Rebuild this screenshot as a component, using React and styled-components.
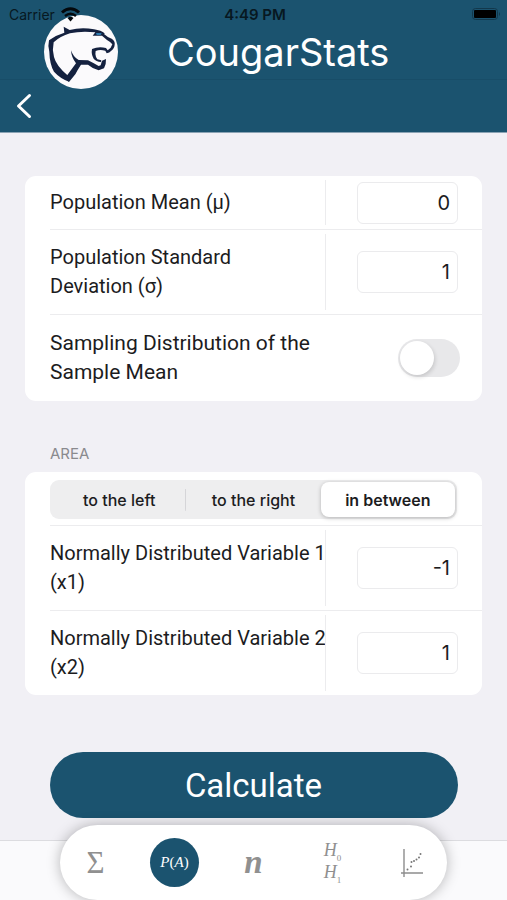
import { useState } from "react";
import styled, { createGlobalStyle } from "styled-components";

function CougarLogo() {
  return (
    <Logo viewBox="0 0 222 222" role="img" aria-label="Cougar">
      <circle cx="111" cy="111" r="111" fill="#fbfafc" />
      {/* back of the head and neck */}
      <path
        fill="#14213f"
        d="M59 35 L77 45 Q112 36 150 43 Q172 46 182 55 L177 62 L146 62 L154 52 Q112 47 78 55 Q48 64 29 82 Q24 104 30 126 Q36 152 72 182 L75 200 Q48 190 30 170 Q17 148 16 110 Q11 92 15 76 Q36 60 61 53 Z"
      />
      {/* throat and lower jaw */}
      <path
        fill="#14213f"
        d="M81 106 Q88 127 104 135 L132 136 Q150 145 164 153 L170 151 L174 137 L186 132 Q187 148 180 160 L164 166 Q146 161 132 149 L111 149 Q101 164 94 178 L75 201 L60 186 L70 180 L96 145 Q82 127 81 106 Z"
      />
      {/* muzzle and mouth */}
      <path
        fill="#14213f"
        d="M177 55 Q190 67 203 71 Q214 78 212 89 Q211 101 201 108 Q197 114 188 115 L184 107 Q167 103 155 108 Q153 115 156 126 L160 133 L172 136 L171 141 Q156 140 149 131 Q141 118 144 102 Q163 94 186 99 L191 106 Q196 101 200 98 L205 88 Q200 81 189 75 L174 62 Z"
      />
      <path fill="#2b78ad" d="M156 54 L173 54 L170 60 L158 60 Z" />
    </Logo>
  );
}

function StatusBar() {
  return (
    <StyledStatus>
      <Carrier>
        Carrier
        <svg width="19" height="15" viewBox="0 0 19 15" fill="none" stroke="#03080c">
          <path d="M1 5.500 Q9.500 -2 18 5.500" strokeWidth="3" />
          <path d="M4 9 Q9.500 4.500 15 9" strokeWidth="2.500" />
          <path d="M6.500 11 Q9.500 8.500 12.500 11 L9.500 14.500 Z" fill="#03080c" stroke="none" />
        </svg>
      </Carrier>
      <Clock>4:49 PM</Clock>
      <Battery width="29" height="12" viewBox="0 0 29 12">
        <rect x="0.500" y="0.500" width="25" height="11" rx="3" fill="none" stroke="#12384c" />
        <rect x="2" y="2" width="22" height="8" rx="1" fill="#000" />
        <path d="M27 4 Q29 6 27 8 Z" fill="#12384c" />
      </Battery>
    </StyledStatus>
  );
}

function NumberRow({ id, children, value }) {
  const [number, setNumber] = useState(value);
  return (
    <Row>
      <Label htmlFor={id}>{children}</Label>
      <ValueCell>
        <NumberInput
          id={id}
          type="text"
          inputMode="decimal"
          value={number}
          onChange={(e) => setNumber(e.target.value)}
        />
      </ValueCell>
    </Row>
  );
}

const areas = ["to the left", "to the right", "in between"];

function App() {
  const [area, setArea] = useState("in between");
  const [sampling, setSampling] = useState(false);

  return (
    <Page>
      <GlobalStyle />
      <Header>
        <StatusBar />
        <Brand>
          <CougarLogo />
          <Title>CougarStats</Title>
        </Brand>
        <BackButton type="button" aria-label="Back">
          <svg width="16" height="26" viewBox="0 0 16 26" fill="none" stroke="#fff" strokeWidth="3" strokeLinecap="round" strokeLinejoin="round">
            <path d="M13.500 2.500 L2.500 13 L13.500 23.500" />
          </svg>
        </BackButton>
      </Header>

      <Form onSubmit={(e) => e.preventDefault()}>
        <Card>
          <NumberRow id="mean" value="0">Population Mean (μ)</NumberRow>
          <NumberRow id="deviation" value="1">
            Population Standard
            <br />
            Deviation (σ)
          </NumberRow>
          <Row>
            <Label htmlFor="sampling" $wide>
              Sampling Distribution of the
              <br />
              Sample Mean
            </Label>
            <Toggle
              id="sampling"
              type="checkbox"
              role="switch"
              checked={sampling}
              onChange={(e) => setSampling(e.target.checked)}
            />
          </Row>
        </Card>

        <SectionTitle>AREA</SectionTitle>
        <Card>
          <Row>
            <Segments role="radiogroup" aria-label="Area">
              {areas.map((name) => (
                <Segment key={name} $active={name === area}>
                  <input
                    type="radio"
                    name="area"
                    checked={name === area}
                    onChange={() => setArea(name)}
                  />
                  {name}
                </Segment>
              ))}
            </Segments>
          </Row>
          <NumberRow id="x1" value="-1">
            Normally Distributed Variable 1
            <br />
            (x1)
          </NumberRow>
          <NumberRow id="x2" value="1">
            Normally Distributed Variable 2
            <br />
            (x2)
          </NumberRow>
        </Card>
        <Calculate type="submit">Calculate</Calculate>
      </Form>

      <Footer>
        <Tabs>
          <Tab href="#summary" $size={31}>Σ</Tab>
          <Tab href="#probability" $active $size={15}>
            <span><i>P</i>(<i>A</i>)</span>
          </Tab>
          <Tab href="#sample" $size={33}><b><i>n</i></b></Tab>
          <Tab href="#hypothesis" $size={18}>
            <Hypothesis><i>H</i><sub>0</sub></Hypothesis>
            <Hypothesis><i>H</i><sub>1</sub></Hypothesis>
          </Tab>
          <Tab href="#regression" aria-label="Regression">
            <svg width="24" height="30" viewBox="0 0 24 30" stroke="#8d8d8d" strokeWidth="1.400" fill="#777">
              <path d="M4 1 V29 M1 25 H23" />
              <g stroke="none">
                <circle cx="7.500" cy="21.500" r="1" />
                <circle cx="11" cy="18.500" r="1" />
                <circle cx="11.500" cy="14" r="1" />
                <circle cx="14" cy="13" r="1" />
                <circle cx="16.500" cy="11.500" r="1" />
                <circle cx="19" cy="9.500" r="1" />
                <circle cx="20.500" cy="6" r="1" />
              </g>
            </svg>
          </Tab>
        </Tabs>
      </Footer>
    </Page>
  );
}

const GlobalStyle = createGlobalStyle`
  * {
    box-sizing: border-box;
  }
  body {
    margin: 0;
    background: #f1f0f5;
    color: #1c1c1e;
    font-family: Inter, "Liberation Sans", sans-serif;
  }
  button, input {
    font-family: inherit;
    color: inherit;
  }
`;

const Page = styled.div`
  display: flex;
  flex-direction: column;
  min-height: 100vh;
`;

const Header = styled.header`
  background: #1b536f;
  background-image: linear-gradient(#184d68, #184d68);
  background-repeat: no-repeat;
  background-position: 0 79px;
  background-size: 100% 1px;
  border-bottom: 1px solid #8ba3b4;
`;

const StyledStatus = styled.div`
  position: relative;
  z-index: 1;
  display: grid;
  grid-template-columns: 1fr auto 1fr;
  align-items: center;
  height: 28px;
  padding: 0 6px 0 9px;
  color: #071821;
  font-size: 14px;
`;

const Carrier = styled.span`
  display: flex;
  align-items: center;
  gap: 6px;
`;

const Clock = styled.span`
  font-size: 15px;
  font-weight: 600;
`;

const Battery = styled.svg`
  justify-self: end;
`;

const Brand = styled.div`
  display: flex;
  align-items: center;
  gap: 49px;
  margin-top: -13px;
  padding-left: 44px;
`;

const Logo = styled.svg`
  width: 74px;
  height: 74px;
`;

const Title = styled.h1`
  margin: 0;
  color: #fff;
  font-size: 38px;
  font-weight: 400;
`;

const BackButton = styled.button`
  display: flex;
  margin: 4px 0 13px 16px;
  padding: 0;
  border: 0;
  background: none;
`;

const Form = styled.form`
  flex: 1;
  padding: 43px 25px 0;
`;

const Card = styled.section`
  padding-left: 25px;
  border-radius: 11px;
  background: #fff;
`;

const Row = styled.div`
  display: flex;
  align-items: center;
  min-height: 53px;
  & + & {
    min-height: 85px;
    border-top: 1px solid #ececee;
  }
`;

const Label = styled.label`
  flex: 1;
  min-width: 0;
  padding: ${(props) => (props.$wide ? 14 : 0)}px 0;
  font-family: Roboto, Inter, sans-serif;
  font-size: ${(props) => (props.$wide ? 21 : 20)}px;
  line-height: 29px;
  white-space: nowrap;
`;

const ValueCell = styled.div`
  display: flex;
  align-items: center;
  align-self: stretch;
  flex: 0 0 157px;
  margin: 4px 0;
  padding: 0 24px 0 31px;
  border-left: 1px solid #ececee;
`;

const NumberInput = styled.input`
  width: 100%;
  height: 42px;
  padding: 0 7px;
  border: 1px solid #ebebed;
  border-radius: 6px;
  background: #fff;
  font-size: 20px;
  text-align: right;
`;

const Toggle = styled.input`
  appearance: none;
  display: flex;
  align-items: center;
  width: 62px;
  height: 38px;
  margin: 0 22px 0 0;
  padding: 2px;
  border-radius: 19px;
  background: #e8e8ea;
  &::before {
    content: "";
    width: 34px;
    height: 34px;
    border-radius: 50%;
    background: #fff;
    box-shadow: 1px 2px 4px rgba(0, 0, 0, 0.15);
  }
  &:checked {
    justify-content: flex-end;
    background: #1b536f;
  }
`;

const SectionTitle = styled.h2`
  margin: 43px 0 8px 25px;
  color: #8a8a8e;
  font-size: 15px;
  font-weight: 400;
  line-height: 20px;
`;

const Segments = styled.div`
  display: flex;
  flex: 1;
  height: 39px;
  margin: 2px 25px 0 0;
  padding: 2px;
  border-radius: 9px;
  background: #eeeeef;
`;

const Segment = styled.label`
  display: flex;
  align-items: center;
  justify-content: center;
  flex: 1;
  border-radius: 8px;
  font-size: 16px;
  font-weight: ${(props) => (props.$active ? 600 : 500)};
  background: ${(props) => (props.$active ? "#fff" : "none")};
  box-shadow: ${(props) => (props.$active ? "0 1px 4px rgba(0, 0, 0, 0.25)" : "none")};
  input {
    position: absolute;
    opacity: 0;
    margin: 0;
  }
  &:first-child {
    background-image: linear-gradient(#d5d5d8, #d5d5d8);
    background-repeat: no-repeat;
    background-position: right center;
    background-size: ${(props) => (props.$active ? 0 : 1)}px 22px;
  }
`;

const Calculate = styled.button`
  display: block;
  width: calc(100% - 49px);
  height: 66px;
  margin: 57px auto 0;
  padding: 0;
  border: 0;
  border-radius: 33px;
  background: #1b536f;
  color: #fff;
  font-family: Roboto, Inter, sans-serif;
  font-size: 33px;
`;

const Footer = styled.footer`
  height: 60px;
  margin-top: 22px;
  padding: 0 60px;
  border-top: 1px solid #dcdce0;
  background: #fafafc;
`;

const Tabs = styled.nav`
  display: flex;
  align-items: center;
  justify-content: space-between;
  height: 75px;
  margin-top: -16px;
  padding: 0 11px;
  border-radius: 38px;
  background: #fff;
  box-shadow: 0 0 14px rgba(0, 0, 0, 0.28);
`;

const Tab = styled.a`
  display: flex;
  flex-direction: column;
  align-items: center;
  justify-content: center;
  width: 49px;
  height: 49px;
  border-radius: 50%;
  background: ${(props) => (props.$active ? "#1b536f" : "none")};
  color: ${(props) => (props.$active ? "#fff" : "#909090")};
  font-family: "Liberation Serif", serif;
  font-size: ${(props) => props.$size || 16}px;
  line-height: 1;
  text-decoration: none;
`;

const Hypothesis = styled.span`
  line-height: 18px;
  sub {
    font-size: 9px;
    line-height: 1;
  }
`;

export default App;
